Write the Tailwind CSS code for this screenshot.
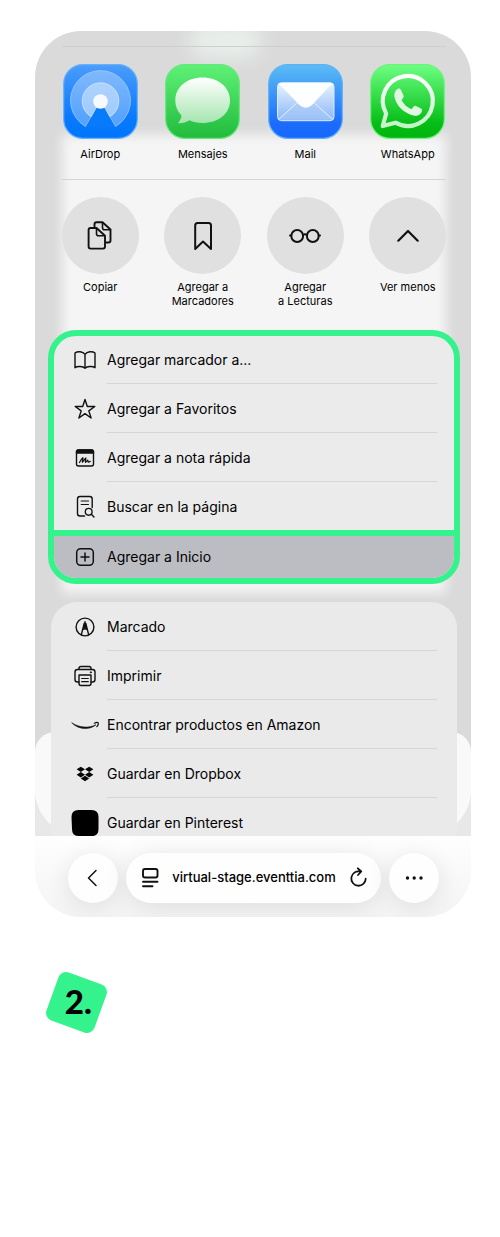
<!DOCTYPE html>
<html lang="es">

<head>
    <meta charset="UTF-8">
    <meta name="viewport" content="width=device-width, initial-scale=1.0">
    <title>Agregar a Inicio</title>
    <script src="https://cdn.jsdelivr.net/npm/@tailwindcss/browser@4"></script>
</head>

<body class="bg-white font-['Inter',sans-serif] text-black">
    <main class="pt-[31px] pl-[35px] pr-[29px] pb-52">

        <!-- share sheet -->
        <section class="relative isolate overflow-hidden rounded-t-[46px] bg-[#dadada] pl-[13px] pr-[11px]">
            <!-- frosted background -->
            <div class="absolute -z-10 left-[27px] right-[25px] top-[104px] h-[458px] bg-[#f5f5f5] blur-[6px]"></div>
            <div class="absolute -z-10 left-[155px] w-[72px] -top-2 h-[36px] rounded-full bg-[#e8eeea] blur-[9px]"></div>
            <div class="absolute -z-10 inset-x-0 bottom-0 h-[60px] bg-[#e8e8e8]"></div>
            <div class="absolute -z-10 inset-x-0 bottom-0 h-[104px] rounded-t-[20px] rounded-b-[46px] bg-[#f9f9f9]"></div>

            <!-- apps -->
            <div class="mx-[14px] mt-[15px] border-t border-[#cecece]"></div>
            <div class="mx-px grid grid-cols-4 pt-[17px] pb-[18px] text-[11px] leading-[14px]">
                <button class="flex flex-col items-center gap-2">
                    <svg class="size-[75px]" viewBox="0 0 75 75">
                        <defs>
                            <linearGradient id="airBg" x2="0" y2="1">
                                <stop offset="0" stop-color="#4c9cfb" />
                                <stop offset=".7" stop-color="#0a7afc" />
                                <stop offset="1" stop-color="#0075ff" />
                            </linearGradient>
                        </defs>
                        <rect x=".7" y=".7" width="73.600" height="73.600" rx="19" fill="url(#airBg)" stroke="#62b2fb" stroke-width="1.200" />
                        <path d="M22.500 62.500A30 30 0 1 1 52.500 62.500L37.500 37Z" fill="#fff" fill-opacity=".32" stroke="#a4cffd" stroke-opacity=".7" />
                        <path d="M28.500 53A18.300 18.300 0 1 1 46.500 53L37.500 37Z" fill="#fff" fill-opacity=".42" stroke="#d5e8ff" stroke-opacity=".8" />
                        <path d="M23 63L33.500 44H41.500L52 63Z" fill="#087afc" />
                        <circle cx="37.500" cy="37.500" r="7.300" fill="#f6faff" />
                    </svg>
                    AirDrop
                </button>
                <button class="flex flex-col items-center gap-2">
                    <svg class="size-[75px]" viewBox="0 0 75 75">
                        <defs>
                            <linearGradient id="msgBg" x2="0" y2="1">
                                <stop offset="0" stop-color="#5ff177" />
                                <stop offset="1" stop-color="#21bb3c" />
                            </linearGradient>
                            <linearGradient id="msgFg" x2="0" y2="1">
                                <stop offset="0" stop-color="#fff" />
                                <stop offset="1" stop-color="#a5e5ae" />
                            </linearGradient>
                        </defs>
                        <rect x=".7" y=".7" width="73.600" height="73.600" rx="19" fill="url(#msgBg)" stroke="#63e87a" stroke-width="1.200" />
                        <path d="M37.500 13.500C53 13.500 65 23 65 36.500S53 59 37.500 59C32.500 59 28 58 24.500 56.300C21 58.500 17.500 59.300 14 59.200C13.300 59 13.300 58.300 13.700 57.900C15.500 56 16.500 54 16.300 51.300C12.300 47.300 10.300 42 10.300 36.500C10.300 23 22 13.500 37.500 13.500Z" fill="url(#msgFg)" />
                    </svg>
                    Mensajes
                </button>
                <button class="flex flex-col items-center gap-2">
                    <svg class="size-[75px]" viewBox="0 0 75 75">
                        <defs>
                            <linearGradient id="mailBg" x2="0" y2="1">
                                <stop offset="0" stop-color="#5cbcf5" />
                                <stop offset=".8" stop-color="#1b6cfb" />
                                <stop offset="1" stop-color="#1767ff" />
                            </linearGradient>
                            <linearGradient id="mailFg" x2="0" y2="1">
                                <stop offset="0" stop-color="#eaf4ff" />
                                <stop offset="1" stop-color="#8ab6f6" />
                            </linearGradient>
                        </defs>
                        <rect x=".7" y=".7" width="73.600" height="73.600" rx="19" fill="url(#mailBg)" stroke="#5eb0f7" stroke-width="1.200" />
                        <rect x="9.500" y="18.700" width="56.500" height="38" rx="4" fill="url(#mailFg)" stroke="#dcecff" />
                        <path d="M10.500 55.500L30 38H45L65 55.500" fill="#a9cbf8" fill-opacity=".5" stroke="#e9f3ff" stroke-width="1" />
                        <path d="M11 19H64.500L44 41Q37.700 46.500 31.500 41L11 20Z" fill="#fdfeff" />
                    </svg>
                    Mail
                </button>
                <button class="flex flex-col items-center gap-2">
                    <svg class="size-[75px]" viewBox="0 0 75 75">
                        <defs>
                            <linearGradient id="waBg" x2="0" y2="1">
                                <stop offset="0" stop-color="#6dff83" />
                                <stop offset=".8" stop-color="#05bd16" />
                                <stop offset="1" stop-color="#00b40d" />
                            </linearGradient>
                            <linearGradient id="waFg" x2="0" y2="1">
                                <stop offset="0" stop-color="#fff" />
                                <stop offset="1" stop-color="#c3f4c6" />
                            </linearGradient>
                        </defs>
                        <rect x=".7" y=".7" width="73.600" height="73.600" rx="19" fill="url(#waBg)" stroke="#6df27c" stroke-width="1.200" />
                        <path d="M12.700 62L16.200 49.500A25 25 0 1 1 25.500 58.700Z" fill="none" stroke="url(#waFg)" stroke-width="4.200" stroke-linejoin="round" />
                        <path d="M28.500 24.500C30 24.300 30.500 25 31 26L33.500 31.500C34 32.800 33.500 33.500 31.500 36C33.500 40 37 43.300 41.500 45.200C43.800 42 44.500 41.200 46 41.900L51 44.400C52 45 52.300 45.500 52 47C51.300 50.300 48 52 44.500 51.700C34 49.800 25.500 41 24.300 32C24.200 28.500 26 25 28.500 24.500Z" fill="#dff9e1" />
                    </svg>
                    WhatsApp
                </button>
            </div>
            <div class="mx-[14px] border-t border-[#d4d4d4]"></div>

            <!-- quick actions -->
            <div class="mx-px grid grid-cols-4 items-start pt-[17px] pb-[22px] text-[11px] leading-[14px]">
                <button class="flex flex-col items-center gap-[6px]">
                    <span class="flex size-[77px] items-center justify-center rounded-full bg-[#dfe0df]">
                        <svg class="size-8" viewBox="0 0 32 32" fill="none" stroke="#111" stroke-width="1.900" stroke-linejoin="round">
                            <path d="M10.500 7.500V4.500Q10.500 2.300 12.500 2.300H18.500L26.500 9.500V20.500Q26.500 22.500 24.500 22.500H21.500" />
                            <path d="M18.500 2.500V7.500Q18.500 9.800 20.500 9.800H26.500" stroke-width="1.600" />
                            <path d="M6.500 8H12.500L21 15.700V26.500Q21 28.600 19 28.600H6.500Q4.600 28.600 4.600 26.500V10Q4.600 8 6.500 8Z" />
                            <path d="M12.500 8V13.700Q12.500 15.700 14.500 15.700H21" stroke-width="1.600" />
                        </svg>
                    </span>
                    Copiar
                </button>
                <button class="flex flex-col items-center gap-[6px]">
                    <span class="flex size-[77px] items-center justify-center rounded-full bg-[#dfe0df]">
                        <svg class="size-8" viewBox="0 0 32 32" fill="none" stroke="#111" stroke-width="2" stroke-linejoin="round">
                            <path d="M8.200 29V5.500Q8.200 3 10.500 3H21.700Q24 3 24 5.500V29L16 21.500Z" />
                        </svg>
                    </span>
                    <span>Agregar a<br>Marcadores</span>
                </button>
                <button class="flex flex-col items-center gap-[6px]">
                    <span class="flex size-[77px] items-center justify-center rounded-full bg-[#dfe0df]">
                        <svg class="size-8" viewBox="0 0 32 32" fill="none" stroke="#111" stroke-width="2" stroke-linecap="round">
                            <circle cx="8.200" cy="16" r="5.900" />
                            <circle cx="23.800" cy="16" r="5.900" />
                            <path d="M13.800 15Q16 13.600 18.200 15M1 15.500H2.300M29.700 15.500H31" />
                        </svg>
                    </span>
                    <span>Agregar<br>a Lecturas</span>
                </button>
                <button class="flex flex-col items-center gap-[6px]">
                    <span class="flex size-[77px] items-center justify-center rounded-full bg-[#dfe0df]">
                        <svg class="size-8" viewBox="0 0 32 32" fill="none" stroke="#111" stroke-width="2.200" stroke-linecap="round" stroke-linejoin="round">
                            <path d="M6.300 20.700L16 11L25.700 20.700" />
                        </svg>
                    </span>
                    Ver menos
                </button>
            </div>

            <!-- highlighted actions -->
            <div class="overflow-hidden rounded-[28px] border-6 border-[#34f38c] bg-[#ebebeb] text-[14px] leading-5">
                <button class="flex h-12 w-full items-stretch pl-[17px] pr-[17px] text-left">
                    <svg class="mr-2 size-7 shrink-0 self-center" viewBox="0 0 28 28" fill="none" stroke="#111" stroke-width="1.400" stroke-linecap="round" stroke-linejoin="round">
                        <path d="M14 8.300C12 5.300 6.500 5 4 7V21.700C6.500 19.800 12 20.200 14 22.300C16 20.200 21.500 19.800 24 21.700V7C21.500 5 16 5.300 14 8.300ZM14 8.300V22" />
                    </svg>
                    <span class="flex flex-1 items-center border-b border-[#d6d6d6] pt-px">Agregar marcador a...</span>
                </button>
                <button class="flex h-[49px] w-full items-stretch pl-[17px] pr-[17px] text-left">
                    <svg class="mr-2 size-7 shrink-0 self-center" viewBox="0 0 28 28" fill="none" stroke="#111" stroke-width="1.400" stroke-linejoin="round">
                        <path d="M14 4.500L16.300 11.500H23.800L17.800 15.900L20.100 23L14 18.600L7.900 23L10.200 15.900L4.200 11.500H11.700Z" />
                    </svg>
                    <span class="flex flex-1 items-center border-b border-[#d6d6d6] pt-px">Agregar a Favoritos</span>
                </button>
                <button class="flex h-[49px] w-full items-stretch pl-[17px] pr-[17px] text-left">
                    <svg class="mr-2 size-7 shrink-0 self-center" viewBox="0 0 28 28" fill="none" stroke="#111" stroke-width="1.400" stroke-linecap="round" stroke-linejoin="round">
                        <rect x="5.500" y="6" width="17" height="16" rx="2" />
                        <path d="M5.500 9V8Q5.500 6 7.500 6H20.500Q22.500 6 22.500 8V9Z" fill="#111" />
                        <path d="M8.500 18.500C10 16 11.500 13.500 12 13.700C12.500 14 10.700 18 11.300 18.300C11.800 18.500 14.300 13.600 14.900 13.800C15.500 14 13.600 18 14.300 18.300C14.800 18.500 16.300 16 16.900 16.200C17.300 16.400 16.500 18 17.300 18.200C18 18.300 18.700 17.800 19.300 17.300" stroke-width="1.200" />
                    </svg>
                    <span class="flex flex-1 items-center border-b border-[#d6d6d6] pt-px">Agregar a nota rápida</span>
                </button>
                <button class="flex h-12 w-full items-stretch pl-[17px] pr-[17px] text-left">
                    <svg class="mr-2 size-7 shrink-0 self-center" viewBox="0 0 28 28" fill="none" stroke="#111" stroke-width="1.400" stroke-linecap="round" stroke-linejoin="round">
                        <path d="M13.500 24H9Q6.500 24 6.500 21.500V7Q6.500 4.500 9 4.500H18.700Q21.200 4.500 21.200 7V15.500" />
                        <path d="M10.200 9H17.500M10.200 12.500H17.500" stroke-width="1.200" />
                        <circle cx="17.700" cy="19.800" r="3.400" />
                        <path d="M20.300 22.300L23 25" />
                    </svg>
                    <span class="flex flex-1 items-center pt-px">Buscar en la página</span>
                </button>
                <button class="flex h-12 w-full items-stretch border-t-6 border-[#34f38c] bg-[#bcbdc3] pl-[17px] pr-[17px] text-left">
                    <svg class="mr-2 size-7 shrink-0 self-center" viewBox="0 0 28 28" fill="none" stroke="#111" stroke-width="1.500" stroke-linecap="round">
                        <rect x="5.700" y="5.700" width="16.600" height="16.600" rx="4" />
                        <path d="M14 10V18M10 14H18" />
                    </svg>
                    <span class="flex flex-1 items-center">Agregar a Inicio</span>
                </button>
            </div>

            <!-- other actions -->
            <div class="ml-[3px] mr-[3px] mt-[18px] -mb-[11px] rounded-t-[26px] bg-[#eaeaea] text-[14px] leading-5">
                <button class="flex h-[49px] w-full items-stretch pl-5 pr-5 text-left">
                    <svg class="mr-2 size-7 shrink-0 self-center" viewBox="0 0 28 28" fill="none" stroke="#111" stroke-width="1.400" stroke-linejoin="round">
                        <circle cx="14" cy="14" r="8.900" />
                        <path d="M10.300 21.800L13.200 10.500H14.800L17.700 21.800M12 16.500Q14 15 16 16.500" />
                        <path d="M14 8L12.200 15.700Q14 14.800 15.800 15.700Z" fill="#111" stroke-width=".6" />
                    </svg>
                    <span class="flex flex-1 items-center border-b border-[#d6d6d6] pt-px">Marcado</span>
                </button>
                <button class="flex h-[49px] w-full items-stretch pl-5 pr-5 text-left">
                    <svg class="mr-2 size-7 shrink-0 self-center" viewBox="0 0 28 28" fill="none" stroke="#111" stroke-width="1.400" stroke-linecap="round" stroke-linejoin="round">
                        <path d="M8 7.300V6.500Q8 4.500 10 4.500H18Q20 4.500 20 6.500V7.300" />
                        <path d="M8 20H6.500Q4 20 4 17.500V10Q4 7.500 6.500 7.500H21.500Q24 7.500 24 10V17.500Q24 20 21.500 20H20" />
                        <path d="M8 13H20V21.500Q20 23.500 18 23.500H10Q8 23.500 8 21.500Z" />
                        <path d="M10.700 16.500H17.300M10.700 19.700H17.300" stroke-width="1.200" />
                        <circle cx="19.800" cy="10.300" r=".6" fill="#111" stroke-width=".8" />
                    </svg>
                    <span class="flex flex-1 items-center border-b border-[#d6d6d6] pt-px">Imprimir</span>
                </button>
                <button class="flex h-[49px] w-full items-stretch pl-5 pr-5 text-left">
                    <svg class="mr-2 size-7 shrink-0 self-center" viewBox="0 0 28 28" fill="none" stroke="#111" stroke-linecap="round" stroke-linejoin="round">
                        <path d="M1 12C8.500 17 18 17.300 25 13.700C18.500 19.200 8 19 1 12Z" fill="#111" stroke-width=".6" />
                        <path d="M23.300 12.200C24.800 11.500 26.500 11.300 27.200 11.800C27.500 13 26.900 14.600 25.900 15.700" stroke-width="1.200" />
                    </svg>
                    <span class="flex flex-1 items-center border-b border-[#d6d6d6] pt-px">Encontrar productos en Amazon</span>
                </button>
                <button class="flex h-[49px] w-full items-stretch pl-5 pr-5 text-left">
                    <svg class="mr-2 size-7 shrink-0 self-center" viewBox="0 0 28 28" fill="#080808">
                        <path d="M9.800 6.700L14 9.300L9.800 12L5.600 9.300ZM18.200 6.700L22.400 9.300L18.200 12L14 9.300ZM9.800 12L14 14.700L9.800 17.400L5.600 14.700ZM18.200 12L22.400 14.700L18.200 17.400L14 14.700ZM14 15.800L18.200 18.500L14 21.200L9.800 18.500Z" />
                    </svg>
                    <span class="flex flex-1 items-center border-b border-[#d6d6d6] pt-px">Guardar en Dropbox</span>
                </button>
                <button class="flex h-[49px] w-full items-stretch pl-5 pr-5 text-left">
                    <svg class="mr-2 size-7 shrink-0 self-center" viewBox="0 0 28 28">
                        <path d="M.5 8Q.5 1 7.500 1H20.500Q27.500 1 27.500 8V20Q27.500 27 20 27.500L7 27Q1 27 1 20Z" />
                    </svg>
                    <span class="flex flex-1 items-center pt-px">Guardar en Pinterest</span>
                </button>
            </div>
        </section>

        <!-- browser bar -->
        <nav class="flex items-center gap-2 overflow-hidden rounded-b-[46px] bg-linear-to-b from-[#fefefe] to-[#f4f4f4] pt-[17px] pb-[14px] pl-[33px] pr-8">
            <button aria-label="Atrás" class="flex size-[50px] shrink-0 items-center justify-center rounded-full bg-[#fefefe] shadow-[0_4px_24px_rgba(0,0,0,0.1)]">
                <svg class="size-6" viewBox="0 0 24 24" fill="none" stroke="#111" stroke-width="1.500" stroke-linecap="round" stroke-linejoin="round">
                    <path d="M15 4.500L7.500 12L15 19.500" />
                </svg>
            </button>
            <div class="flex h-[50px] min-w-0 flex-1 items-center rounded-full bg-[#fefefe] pl-3 pr-[11px] shadow-[0_4px_24px_rgba(0,0,0,0.1)]">
                <svg class="size-6 shrink-0" viewBox="0 0 24 24" fill="none" stroke="#111" stroke-width="1.900" stroke-linecap="round">
                    <rect x="5" y="3" width="14.500" height="8.500" rx="2" />
                    <path d="M5 15.700H19.500M5 20.200H14.500" />
                </svg>
                <input type="text" aria-label="Dirección" value="virtual-stage.eventtia.com" class="min-w-0 flex-1 bg-transparent text-center text-[13px] font-medium outline-none">
                <button aria-label="Recargar">
                    <svg class="size-6" viewBox="0 0 24 24" fill="none" stroke="#111" stroke-width="1.800" stroke-linecap="round" stroke-linejoin="round">
                        <path d="M14 5.500A7.200 7.200 0 1 0 19.700 12.700M11.800 2.300L15.300 5.500L12 9" />
                    </svg>
                </button>
            </div>
            <button aria-label="Más" class="flex size-[50px] shrink-0 items-center justify-center rounded-full bg-[#fefefe] shadow-[0_4px_24px_rgba(0,0,0,0.1)]">
                <svg class="size-6" viewBox="0 0 24 24" fill="#111">
                    <circle cx="5.500" cy="12" r="1.700" />
                    <circle cx="12.200" cy="12" r="1.700" />
                    <circle cx="19" cy="12" r="1.700" />
                </svg>
            </button>
        </nav>

        <!-- step number -->
        <div class="ml-4 mt-[60px] flex size-[51px] rotate-[20deg] items-center justify-center rounded-lg bg-[#34f38c]">
            <span class="-rotate-[20deg] pb-1 pl-1 font-['Lato',sans-serif] text-[33px] leading-9 font-black">2.</span>
        </div>
    </main>
</body>

</html>
